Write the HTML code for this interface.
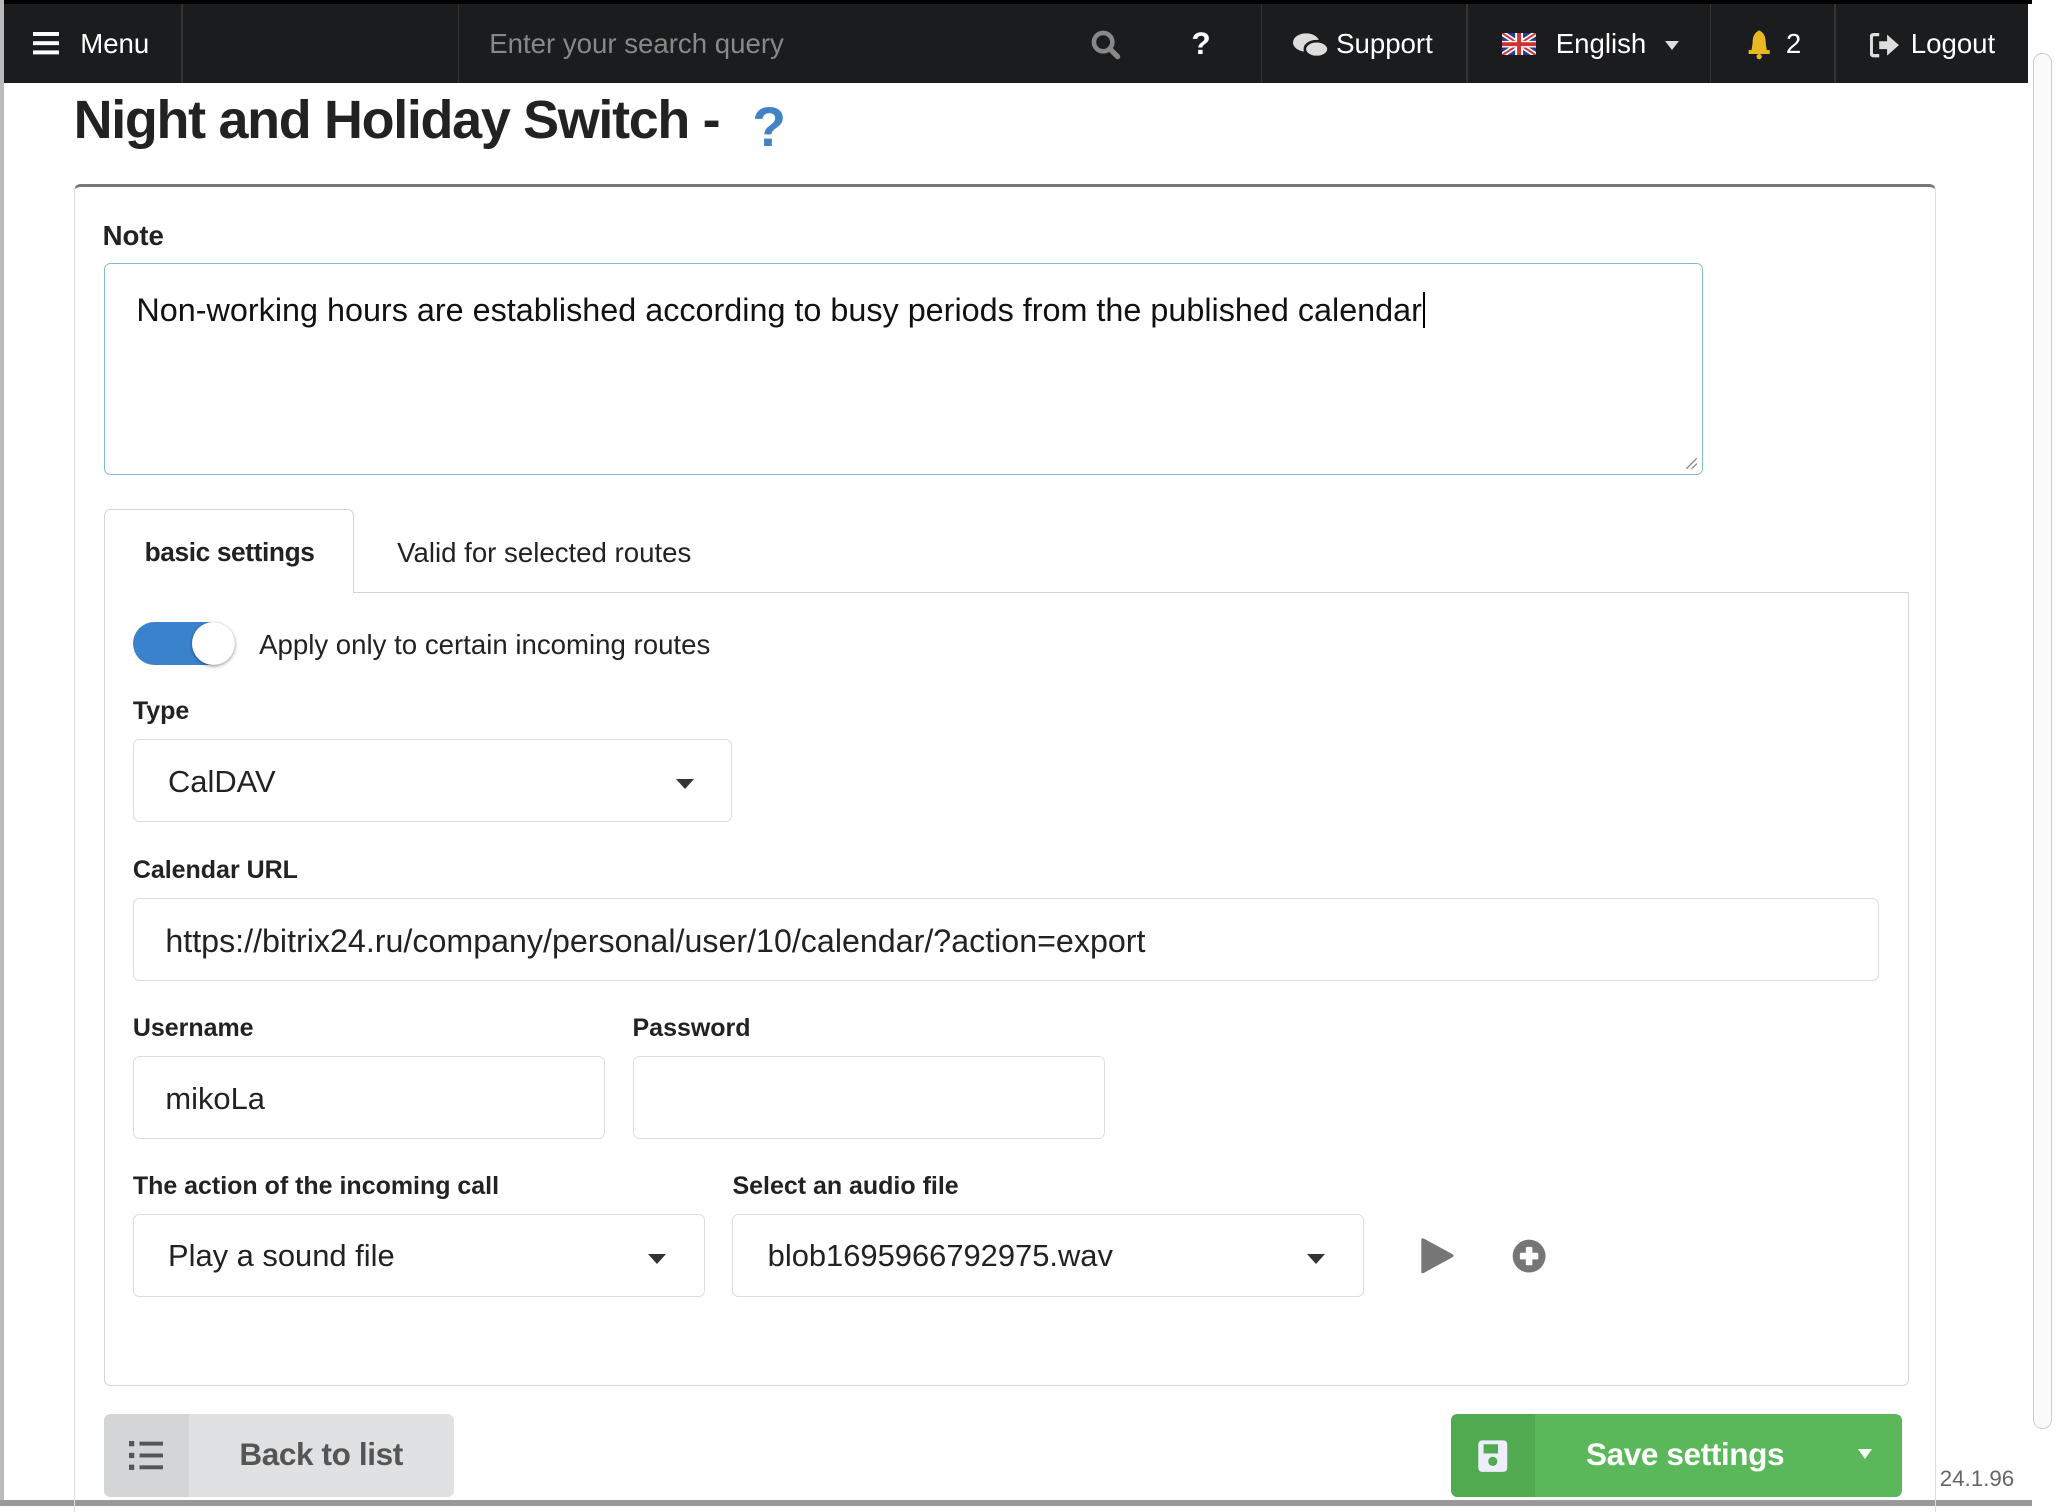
<!DOCTYPE html>
<html><head><meta charset="utf-8"><style>
html{zoom:1.31505}
body{margin:0;width:1568px;height:1145px;position:relative;overflow:hidden;background:#fff;font-family:"Liberation Sans",sans-serif;color:#222}
.a{position:absolute}
.nav{left:3px;top:3px;width:1539px;height:60px;background:#1b1c1d;color:#fff;font-size:21px}
.sep{position:absolute;top:0;width:1px;height:60px;background:#333}
.nt{position:absolute;top:18px;color:#fff}
.lbl{position:absolute;font-weight:bold;font-size:19px;color:#222}
.inp{position:absolute;border:1px solid #ddd;border-radius:5px;background:#fff;box-sizing:border-box;font-size:23.5px;color:#222}
.inp span{position:absolute;left:26px;top:18px}
.car{position:absolute;width:0;height:0;border-left:7px solid transparent;border-right:7px solid transparent;border-top:8px solid #333}
</style></head><body>
<div class="a" style="left:0;top:0;width:1545px;height:3px;background:#000"></div>
<div class="a" style="left:0;top:0;width:3px;height:1145px;background:#bbb"></div>
<div class="a" style="left:0;top:1141px;width:1545px;height:4px;background:#999"></div>
<div class="a" style="left:1546px;top:40px;width:13px;height:1045px;border:1px solid #ccc;border-radius:7px;background:#fafafa"></div>
<div class="a nav">
 <svg class="a" style="left:22px;top:21px" width="20" height="18"><rect y="0" width="20" height="3" fill="#fff"/><rect y="7" width="20" height="3" fill="#fff"/><rect y="14" width="20" height="3" fill="#fff"/></svg>
 <div class="nt" style="left:58px">Menu</div>
 <div class="sep" style="left:135px"></div><div class="sep" style="left:345px"></div>
 <div class="nt" style="left:369px;color:#888">Enter your search query</div>
 <svg class="a" style="left:826px;top:19px" width="24" height="24"><circle cx="10" cy="10" r="7" fill="none" stroke="#888" stroke-width="3.5"/><line x1="15" y1="15" x2="21" y2="21" stroke="#888" stroke-width="4" stroke-linecap="round"/></svg>
 <div class="nt" style="left:903px;font-weight:bold;font-size:24px;top:16px">?</div>
 <div class="sep" style="left:956px"></div>
 <svg class="a" style="left:980px;top:21px" width="28" height="22"><ellipse cx="10" cy="8" rx="10" ry="7" fill="#ddd"/><ellipse cx="18" cy="13" rx="9" ry="6" fill="#ddd" stroke="#1b1c1d" stroke-width="2"/></svg>
 <div class="nt" style="left:1013px">Support</div>
 <div class="sep" style="left:1112px"></div>
 <svg class="a" style="left:1139px;top:22px" width="26" height="17"><rect width="26" height="17" fill="#2a3a8a"/><path d="M0 0L26 17M26 0L0 17" stroke="#fff" stroke-width="4"/><path d="M0 0L26 17M26 0L0 17" stroke="#c33" stroke-width="1.5"/><rect x="10" width="6" height="17" fill="#fff"/><rect y="6" width="26" height="5" fill="#fff"/><rect x="11.5" width="3" height="17" fill="#c33"/><rect y="7" width="26" height="3" fill="#c33"/></svg>
 <div class="nt" style="left:1180px">English</div>
 <div class="car" style="left:1263px;top:28px;border-left-width:6px;border-right-width:6px;border-top:7px solid #ddd"></div>
 <div class="sep" style="left:1297px"></div>
 <svg class="a" style="left:1325px;top:19px" width="20" height="24"><path d="M10 1C6 3 5 6 5 11L4 17H16L15 11C15 6 14 3 10 1Z" fill="#e8b923"/><rect x="2" y="16" width="16" height="3" fill="#e8b923"/><circle cx="10" cy="21" r="2" fill="#e8b923"/></svg>
 <div class="nt" style="left:1355px">2</div>
 <div class="sep" style="left:1392px"></div>
 <svg class="a" style="left:1419px;top:21px" width="24" height="20"><path d="M7 2H3Q1 2 1 4V16Q1 18 3 18H7" fill="none" stroke="#ddd" stroke-width="2.5"/><path d="M7 7H13V2L22 10L13 18V13H7Z" fill="#ddd"/></svg>
 <div class="nt" style="left:1450px">Logout</div>
</div>
<div class="a" style="left:56px;top:68px;font-size:41px;font-weight:bold;color:#222;letter-spacing:-1px">Night and Holiday Switch -</div>
<div class="a" style="left:572px;top:72px;font-size:42px;font-weight:bold;color:#4183c4">?</div>
<div class="a" style="left:56px;top:140px;width:1416px;height:1010px;border-top:3px solid #777;border-left:1px solid #ddd;border-right:1px solid #ddd;border-radius:5px 5px 0 0;box-sizing:border-box"></div>
<div class="lbl" style="left:78px;top:167px;font-size:21px">Note</div>
<div class="inp" style="left:79px;top:200px;width:1216px;height:161px;border-color:#85b7d9"><span style="left:24px;top:21px;font-size:24.6px;color:#111">Non-working hours are established according to busy periods from the published calendar<b style="font-weight:normal;border-left:2px solid #000;margin-left:1px"></b></span>
<svg class="a" style="right:3px;bottom:3px" width="10" height="10"><path d="M9 1L1 9M9 5L5 9" stroke="#888"/></svg></div>
<div class="a" style="left:79px;top:387px;width:190px;height:64px;border:1px solid #d4d4d5;border-bottom:none;border-radius:5px 5px 0 0;box-sizing:border-box;background:#fff;z-index:2"></div>
<div class="a" style="left:110px;top:408px;font-size:20px;font-weight:bold;z-index:3;letter-spacing:-0.3px">basic settings</div>
<div class="a" style="left:302px;top:408px;font-size:21px">Valid for selected routes</div>
<div class="a" style="left:79px;top:450px;width:1373px;height:604px;border:1px solid #d4d4d5;border-radius:0 0 5px 5px;box-sizing:border-box;z-index:1"></div>
<div class="a" style="left:101px;top:473px;width:78px;height:33px;border-radius:17px;background:#3b82cc"></div>
<div class="a" style="left:146px;top:473px;width:33px;height:33px;background:#fff;border-radius:50%;box-shadow:0 1px 3px rgba(0,0,0,.4)"></div>
<div class="a" style="left:197px;top:478px;font-size:21px">Apply only to certain incoming routes</div>
<div class="lbl" style="left:101px;top:530px">Type</div>
<div class="inp" style="left:101px;top:562px;width:456px;height:63px"><span>CalDAV</span><div class="car" style="left:412px;top:30px"></div></div>
<div class="lbl" style="left:101px;top:651px">Calendar URL</div>
<div class="inp" style="left:101px;top:683px;width:1328px;height:63px"><span style="left:24px;font-size:24.5px">https://bitrix24.ru/company/personal/user/10/calendar/?action=export</span></div>
<div class="lbl" style="left:101px;top:771px">Username</div>
<div class="inp" style="left:101px;top:803px;width:359px;height:63px"><span style="left:24px">mikoLa</span></div>
<div class="lbl" style="left:481px;top:771px">Password</div>
<div class="inp" style="left:481px;top:803px;width:359px;height:63px"></div>
<div class="lbl" style="left:101px;top:891px">The action of the incoming call</div>
<div class="inp" style="left:101px;top:923px;width:435px;height:63px"><span>Play a sound file</span><div class="car" style="left:391px;top:30px"></div></div>
<div class="lbl" style="left:557px;top:891px">Select an audio file</div>
<div class="inp" style="left:557px;top:923px;width:480px;height:63px"><span>blob1695966792975.wav</span><div class="car" style="left:436px;top:30px"></div></div>
<svg class="a" style="left:1080px;top:940px" width="28" height="30"><path d="M3 2L25 14Q26 15 25 16L3 28Q1 29 1 27V3Q1 1 3 2Z" fill="#767676"/></svg>
<svg class="a" style="left:1150px;top:942px" width="26" height="26"><circle cx="13" cy="13" r="12.5" fill="#767676"/><rect x="10.5" y="6" width="5" height="14" rx="1" fill="#fff"/><rect x="6" y="10.5" width="14" height="5" rx="1" fill="#fff"/></svg>
<div class="a" style="left:79px;top:1075px;width:266px;height:63px;background:#e0e1e2;border-radius:5px;overflow:hidden"><div class="a" style="left:0;top:0;width:65px;height:63px;background:#d4d5d7"></div>
<svg class="a" style="left:19px;top:21px" width="26" height="22"><g fill="#555"><rect x="0" y="0" width="4" height="4"/><rect x="0" y="9" width="4" height="4"/><rect x="0" y="18" width="4" height="4"/><rect x="8" y="0.5" width="18" height="3"/><rect x="8" y="9.5" width="18" height="3"/><rect x="8" y="18.5" width="18" height="3"/></g></svg>
<div class="a" style="left:103px;top:17px;font-size:24px;font-weight:bold;color:#555;letter-spacing:-0.3px">Back to list</div></div>
<div class="a" style="left:1103px;top:1075px;width:343px;height:63px;background:#5bb85a;border-radius:5px;overflow:hidden"><div class="a" style="left:0;top:0;width:64px;height:63px;background:#52aa50"></div>
<svg class="a" style="left:20px;top:19px" width="24" height="26"><rect x="1" y="1" width="22" height="24" rx="3" fill="#eef"/><rect x="5" y="4" width="11" height="7" fill="#52aa50"/><circle cx="12" cy="17" r="3.5" fill="#52aa50"/></svg>
<div class="a" style="left:103px;top:17px;font-size:24px;font-weight:bold;color:#fff;letter-spacing:-0.3px">Save settings</div>
<div class="car" style="left:310px;top:27px;border-top-color:#fff;border-left-width:6px;border-right-width:6px"></div></div>
<div class="a" style="left:1475px;top:1115px;font-size:17px;color:#666">24.1.96</div>
</body></html>
